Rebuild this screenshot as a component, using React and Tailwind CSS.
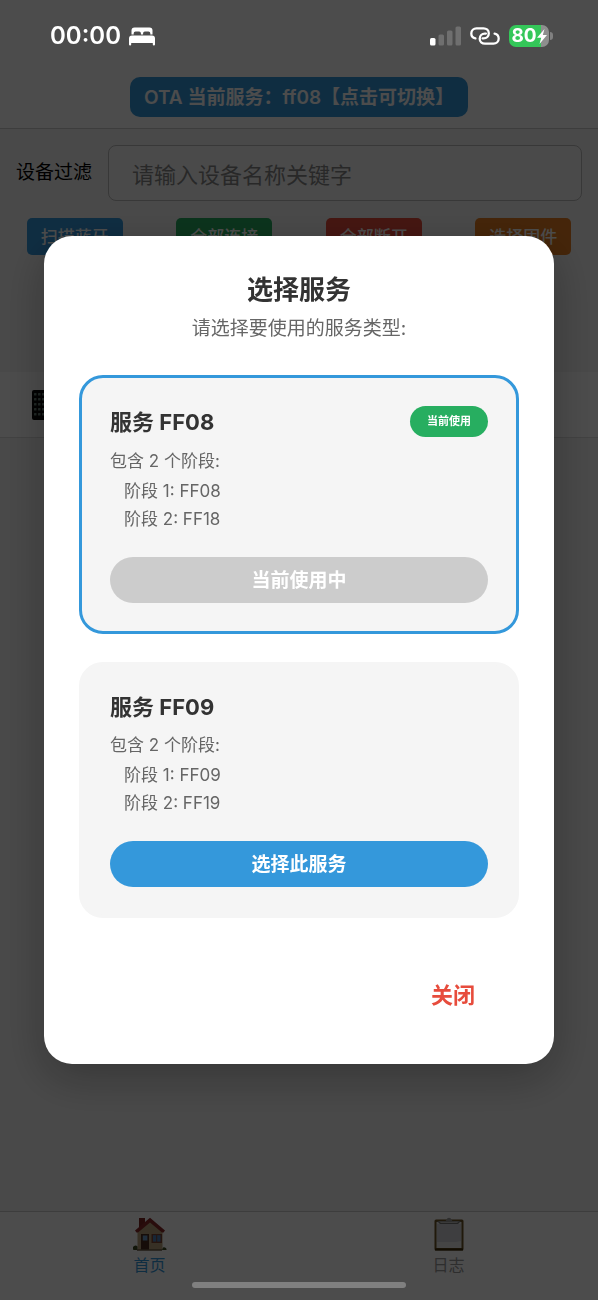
import React, { useState } from "react";

const services = [
  { id: "FF08", stages: ["FF08", "FF18"] },
  { id: "FF09", stages: ["FF09", "FF19"] },
];

const StatusBar = () => (
  <div className="relative z-30 flex h-[72px] items-center justify-between pl-[50px] pr-[45px] text-white">
    <div className="flex items-center gap-2">
      <span className="text-2xl font-semibold">00:00</span>
      <svg className="h-[19px] w-[26px]" viewBox="0 0 26 19" fill="currentColor">
        <path d="M5.5 0.5h15a3 3 0 0 1 3 3V7.6h-2.2V6.2a1.8 1.8 0 0 0-1.8-1.8h-3.6a1.8 1.8 0 0 0-1.8 1.8v1.4h-2.2V6.2a1.8 1.8 0 0 0-1.8-1.8H6.5a1.8 1.8 0 0 0-1.8 1.8v1.4H2.5V3.5a3 3 0 0 1 3-3z" />
        <path d="M3 8.400h20a3 3 0 0 1 3 3v6.100a1 1 0 0 1-2.200 0V16H2.200v1.500a1 1 0 0 1-2.200 0v-6.100a3 3 0 0 1 3-3z" />
      </svg>
    </div>
    <div className="flex items-center gap-[9px]">
      <svg className="h-5 w-8" viewBox="0 0 32 20" fill="currentColor">
        <rect x="1" y="12" width="5.500" height="7.500" rx="1.500" />
        <rect x="9.500" y="8.500" width="5.500" height="11" rx="1.500" opacity="0.200" />
        <rect x="18" y="4.500" width="5.500" height="15" rx="1.500" opacity="0.200" />
        <rect x="26.500" y="0.500" width="5.500" height="19" rx="1.500" opacity="0.200" />
      </svg>
      <svg
        className="h-[18px] w-[30px]"
        viewBox="0 0 30 18"
        fill="none"
        stroke="currentColor"
        strokeWidth="2.300"
        strokeLinecap="round"
      >
        <path d="M5.400 11.400C2.800 10.800 1.300 8.900 1.300 6.400c0-3 2.300-5.100 5.200-5.100h7c3 0 5.300 2 5.300 4.900 0 3.100-2.300 5.200-5 5.200h-1.200" />
        <path d="M24.600 6.600c2.600 0.600 4.100 2.500 4.100 5 0 3-2.300 5.100-5.200 5.100h-8.500c-3 0-5.300-2-5.300-4.900 0-3.100 2.300-5.200 5-5.200h1.200" />
      </svg>
      <div className="flex items-center gap-px">
        <div className="flex h-[22px] w-10 items-center justify-center rounded-[7px] bg-linear-to-r from-[#34c759] from-80% to-[#8e8e8e] to-80%">
          <span className="text-[19px] font-bold">80</span>
          <svg className="h-[15px] w-[10px]" viewBox="0 0 10 15" fill="currentColor">
            <path d="M7.500 0 0 8.700h4.200L2.500 15l7.500-8.900H5.800z" />
          </svg>
        </div>
        <div className="h-2 w-[3px] rounded-r-full bg-[#808080]" />
      </div>
    </div>
  </div>
);

const PhoneIcon = () => (
  <svg className="h-[30px] w-[18px]" viewBox="0 0 18 30">
    <rect width="18" height="30" rx="2" fill="#080808" />
    {[3, 8, 13, 18, 23].map((y) =>
      [2, 6, 10, 14].map((x) => (
        <rect key={`${x}-${y}`} x={x} y={y} width="2.500" height="2.500" rx="0.500" fill="#6b8078" />
      ))
    )}
  </svg>
);

const HomeIcon = () => (
  <svg className="h-[34px] w-[34px]" viewBox="0 0 34 34">
    <rect x="6" y="1" width="6" height="10" fill="#7d2523" />
    <path d="M4.500 14 17 4l12.500 10v19h-25z" fill="#b7a27c" />
    <path d="M2 13.500 17 0.800l15 12.700-1.500 2h-1.500L17 5.500 5 15.500H3.500z" fill="#8b2b2a" />
    <rect x="8" y="17" width="8" height="16" fill="#4b2e20" />
    <rect x="9.800" y="18.500" width="4.600" height="5" fill="#6b9ac8" />
    <rect x="18.500" y="17" width="10.500" height="9" fill="#7d4434" />
    <rect x="20" y="18.200" width="7.500" height="6.400" fill="#4d80b8" />
    <path d="M23.700 18v7" stroke="#7d4434" />
    <path d="M0.500 33a2.500 2.500 0 0 1 4-3.500V33zM29 33l1-2.500a2.400 2.400 0 0 1 3.500 2.500z" fill="#3c4a22" />
    <path d="M4 33h25" stroke="#6b5a45" strokeWidth="1.500" />
  </svg>
);

const LogIcon = () => (
  <svg className="h-[34px] w-[34px]" viewBox="0 0 34 34">
    <rect x="2.500" y="2.500" width="29" height="31" rx="1.500" fill="#6b5526" />
    <rect x="4.500" y="5" width="25" height="26" fill="#e6e6e6" />
    <path d="M5 7h24v17l-5 1H5z" fill="#cfd1d6" />
    <path d="M5 4h24l-3 3H8z" fill="#777" />
    <path d="M7 4.500h20l-2 1.500H9z" fill="#c4c4c4" />
    <path d="M12 4.500c1.500 0 2-1 2.500-2a2.700 2.700 0 0 1 5 0c0.500 1 1 2 2.500 2z" fill="#9c9c9c" />
    <path d="M3 31.500h28v2H3z" fill="#3a2b08" />
  </svg>
);

const ServiceCard = ({ service, active, onSelect }) => (
  <div
    className={`rounded-3xl border-[3px] bg-[#f5f5f5] p-7 ${
      active ? "border-[#3498db]" : "border-[#f5f5f5]"
    }`}
  >
    <div className="flex items-center justify-between">
      <h3 className="text-[22px] leading-7 font-bold text-[#333]">服务 {service.id}</h3>
      {active && (
        <span className="rounded-full bg-[#27ae60] px-[17px] text-[11px] leading-[31px] font-bold text-white">
          当前使用
        </span>
      )}
    </div>
    <p className="mt-3 text-[17px] leading-6 text-[#666]">包含 2 个阶段:</p>
    <ul className="mt-1 pl-[14px] text-[17px] leading-7 text-[#666]">
      {service.stages.map((stage, i) => (
        <li key={stage}>
          阶段 {i + 1}: {stage}
        </li>
      ))}
    </ul>
    <button
      type="button"
      disabled={active}
      onClick={onSelect}
      className={`mt-6 h-[46px] w-full rounded-full pt-[2px] text-[19px] font-bold text-white ${
        active ? "bg-[#ccc]" : "bg-[#3498db]"
      }`}
    >
      {active ? "当前使用中" : "选择此服务"}
    </button>
  </div>
);

const App = () => {
  const [current, setCurrent] = useState("FF08");
  const [open, setOpen] = useState(true);
  const [keyword, setKeyword] = useState("");

  return (
    <div className="flex min-h-screen flex-col bg-[#f5f5f5] font-[Inter,'Noto_Sans_CJK_SC',sans-serif]">
      <header className="border-b border-[#ccc] bg-white pb-[11px]">
        {!open && <div className="fixed inset-x-0 top-0 z-20 h-[72px] bg-[#4c4c4c]" />}
        <StatusBar />
        <div className="mt-[5px] flex justify-center">
          <button
            type="button"
            onClick={() => setOpen(true)}
            className="h-10 rounded-[10px] bg-[#3498db] px-[14px] pt-[2px] text-[19px] font-semibold text-white"
          >
            OTA 当前服务：{current.toLowerCase()}【点击可切换】
          </button>
        </div>
      </header>

      <main className="flex-1">
        <div className="flex items-center gap-4 px-4 pt-4">
          <label htmlFor="filter" className="shrink-0 text-[19px] text-black">
            设备过滤
          </label>
          <input
            id="filter"
            type="text"
            value={keyword}
            onChange={(e) => setKeyword(e.target.value)}
            placeholder="请输入设备名称关键字"
            className="h-14 min-w-0 flex-1 rounded-lg border border-[#bbb] bg-[#f8f8f8] px-[23px] pt-1 text-[22px] placeholder:text-[#888] focus:outline-none"
          />
        </div>
        <div className="mt-[17px] grid grid-cols-4 justify-items-center text-[17px] font-medium text-white">
          <button type="button" className="h-[37px] w-24 rounded-[5px] bg-[#3498db] pt-[2px]">
            扫描蓝牙
          </button>
          <button type="button" className="h-[37px] w-24 rounded-[5px] bg-[#27ae60] pt-[2px]">
            全部连接
          </button>
          <button type="button" className="h-[37px] w-24 rounded-[5px] bg-[#e74c3c] pt-[2px]">
            全部断开
          </button>
          <button type="button" className="h-[37px] w-24 rounded-[5px] bg-[#e67e22] pt-[2px]">
            选择固件
          </button>
        </div>
        <div className="mt-[117px] flex h-[66px] items-center border-b border-[#ddd] bg-white px-8">
          <PhoneIcon />
        </div>
      </main>

      <nav className="grid h-[89px] grid-cols-2 border-t border-[#ccc] bg-white pt-[5px] text-base">
        <a href="#home" className="flex flex-col items-center gap-[2px] text-[#3498db]">
          <HomeIcon />
          <span>首页</span>
        </a>
        <a href="#log" className="flex flex-col items-center gap-[2px] text-[#999]">
          <LogIcon />
          <span>日志</span>
        </a>
      </nav>

      {open && (
        <div className="fixed inset-0 z-20 flex items-center justify-center bg-black/70 px-11">
          <div
            role="dialog"
            aria-labelledby="dialog-title"
            className="w-full rounded-[28px] bg-white p-[35px] shadow-[0_14px_44px_rgba(0,0,0,0.28)]"
          >
            <h2
              id="dialog-title"
              className="text-center text-[26px] leading-[38px] font-bold text-[#333]"
            >
              选择服务
            </h2>
            <p className="mt-[7px] text-center text-[19px] leading-[26px] text-[#666]">
              请选择要使用的服务类型:
            </p>
            <div className="mt-[33px] flex flex-col gap-7">
              {services.map((service) => (
                <ServiceCard
                  key={service.id}
                  service={service}
                  active={service.id === current}
                  onSelect={() => setCurrent(service.id)}
                />
              ))}
            </div>
            <div className="mt-[43px] flex justify-end">
              <button
                type="button"
                onClick={() => setOpen(false)}
                className="px-11 py-[18px] text-[22px] leading-8 font-bold text-[#e74c3c]"
              >
                关闭
              </button>
            </div>
          </div>
        </div>
      )}

      <div className="fixed bottom-3 left-1/2 z-30 h-[6px] w-[214px] -translate-x-1/2 rounded-full bg-[#808080]" />
    </div>
  );
};

export default App;
